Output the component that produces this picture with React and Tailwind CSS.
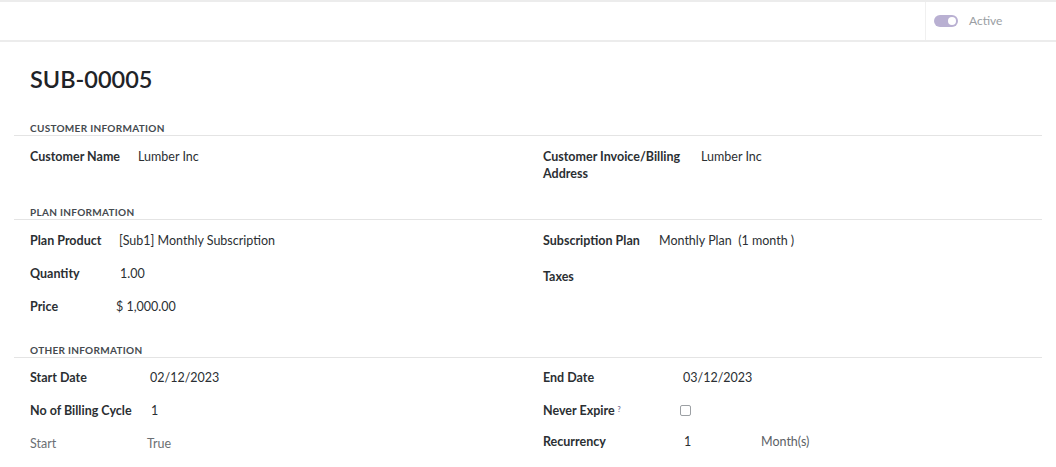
import React from 'react';

const FONT = { fontFamily: 'Lato, "Noto Sans", sans-serif' };

// One label/value row in a form column
const Field = ({ label, labelW, children, muted = false }) => (
  <div className="flex items-start py-[8px] leading-[17px] text-[12.5px]">
    <div
      className={`${labelW} shrink-0 pr-3 ${muted ? 'font-normal text-[#6b6f73]' : 'font-bold text-[#2b2f33]'}`}
    >
      {label}
    </div>
    <div className={muted ? 'text-[#6b6f73]' : 'text-[#2b2f33]'}>{children}</div>
  </div>
);

const SectionTitle = ({ children, className = '' }) => (
  <div className={`border-b border-[#e4e4e4] pl-4 ${className}`}>
    <div className="text-[10px] leading-[14px] font-bold tracking-[0.03em] uppercase text-[#454a4f]">
      {children}
    </div>
  </div>
);

const App = () => {
  return (
    <div className="w-[1056px] h-[467px] overflow-hidden bg-white" style={FONT}>
      {/* Control bar */}
      <div className="flex h-[42px] border-t-2 border-b-2 border-[#ececec]">
        <div className="flex-1" />
        <div className="flex items-center gap-[11px] w-[131px] pl-[8px] border-l border-[#f0f0f0]">
          <div className="relative w-[24px] h-[12px] rounded-full bg-[#b9b0d2]">
            <div className="absolute right-[2px] top-[2px] w-[8px] h-[8px] rounded-full bg-white" />
          </div>
          <span className="text-[12px] text-[#9a9ea3]">Active</span>
        </div>
      </div>

      <div className="pl-[14px] pr-[14px]">
        <h1 className="pl-4 mt-[22px] text-[23.5px] leading-[30px] font-semibold text-[#1f2327]">SUB-00005</h1>

        {/* Customer information */}
        <SectionTitle className="mt-[27px]">Customer Information</SectionTitle>
        <div className="grid grid-cols-2 pt-[4px]">
          <div className="pl-4">
            <Field label="Customer Name" labelW="w-[108px]">Lumber Inc</Field>
          </div>
          <div className="pl-[15px]">
            <Field label={<>Customer Invoice/Billing<br />Address</>} labelW="w-[158px]">Lumber Inc</Field>
          </div>
        </div>

        {/* Plan information */}
        <SectionTitle className="mt-[15px]">Plan Information</SectionTitle>
        <div className="grid grid-cols-2 pt-[4px]">
          <div className="pl-4">
            <Field label="Plan Product" labelW="w-[89px]">[Sub1] Monthly Subscription</Field>
            <Field label="Quantity" labelW="w-[90px]">1.00</Field>
            <Field label="Price" labelW="w-[86px]">$ 1,000.00</Field>
          </div>
          <div className="pl-[15px]">
            <Field label="Subscription Plan" labelW="w-[116px]">Monthly Plan&nbsp; (1 month )</Field>
            <div className="pt-[3px]">
              <Field label="Taxes" labelW="w-[116px]">{''}</Field>
            </div>
          </div>
        </div>

        {/* Other information */}
        <SectionTitle className="mt-[20px]">Other Information</SectionTitle>
        <div className="grid grid-cols-2 pt-[3px]">
          <div className="pl-4">
            <Field label="Start Date" labelW="w-[120px]">02/12/2023</Field>
            <Field label="No of Billing Cycle" labelW="w-[121px]">1</Field>
            <Field label="Start" labelW="w-[117px]" muted>True</Field>
          </div>
          <div className="pl-[15px]">
            <Field label="End Date" labelW="w-[140px]">03/12/2023</Field>
            <Field
              label={
                <>
                  Never Expire<sup className="ml-[3px] text-[7px] text-[#7c6f99] font-bold">?</sup>
                </>
              }
              labelW="w-[137px]"
            >
              <div className="mt-[3px] w-[11px] h-[11px] rounded-[2px] border border-[#9ca0a4] bg-white" />
            </Field>
            <div className="-mt-[2px]">
              <Field label="Recurrency" labelW="w-[141px]">
                <span className="inline-block w-[77px]">1</span>
                <span className="text-[#5c6166]">Month(s)</span>
              </Field>
            </div>
          </div>
        </div>
      </div>
    </div>
  );
};

export default App;
